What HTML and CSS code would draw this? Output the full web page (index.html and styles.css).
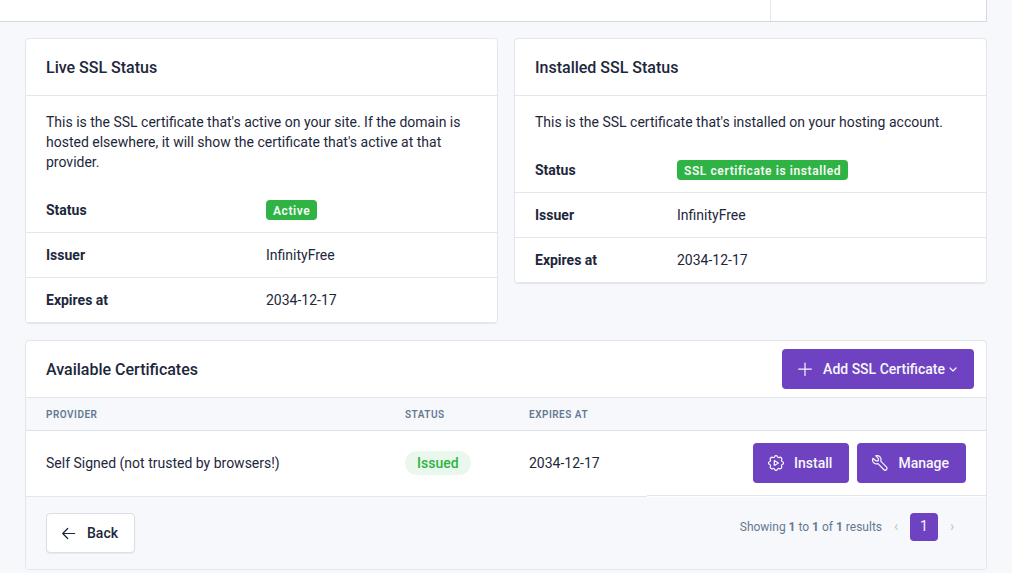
FILE: index.html
```html
<!DOCTYPE html>
<html lang="en">
<head>
<meta charset="utf-8">
<title>SSL Certificates</title>
<link rel="stylesheet" href="styles.css">
</head>
<body>
<div class="frame-strip"><div class="frame-main"></div><div class="frame-side"></div></div>
<main class="page">
  <div class="row">
    <section class="card">
      <div class="card-header"><h3>Live SSL Status</h3></div>
      <p class="card-body">This is the SSL certificate that's active on your site. If the domain is hosted elsewhere, it will show the certificate that's active at that provider.</p>
      <table class="details details-live">
        <tr><th scope="row">Status</th><td><span class="badge">Active</span></td></tr>
        <tr><th scope="row">Issuer</th><td>InfinityFree</td></tr>
        <tr><th scope="row">Expires at</th><td>2034-12-17</td></tr>
      </table>
    </section>
    <section class="card">
      <div class="card-header"><h3>Installed SSL Status</h3></div>
      <p class="card-body">This is the SSL certificate that's installed on your hosting account.</p>
      <table class="details details-installed">
        <tr><th scope="row">Status</th><td><span class="badge">SSL certificate is installed</span></td></tr>
        <tr><th scope="row">Issuer</th><td>InfinityFree</td></tr>
        <tr><th scope="row">Expires at</th><td>2034-12-17</td></tr>
      </table>
    </section>
  </div>
  <section class="card">
    <div class="card-header card-header-actions">
      <h3>Available Certificates</h3>
      <button type="button" class="btn btn-primary">
        <svg class="icon" viewBox="0 0 16 16"><path d="M8 2v12.500M1.700 8.200h12.600"/></svg>
        <span>Add SSL Certificate</span>
        <svg class="caret" viewBox="0 0 8 8"><path d="M1 3l3 3 3-3"/></svg>
      </button>
    </div>
    <table class="certs">
      <thead><tr><th class="col-provider">Provider</th><th class="col-status">Status</th><th class="col-expires">Expires at</th><th></th></tr></thead>
      <tbody><tr>
        <td>Self Signed (not trusted by browsers!)</td>
        <td><span class="status">Issued</span></td>
        <td>2034-12-17</td>
        <td class="actions">
          <button type="button" class="btn btn-primary">
            <svg class="icon" viewBox="0 0 16 16"><path d="M6.500 1.700C7 .2 9 .2 9.500 1.700C9.800 2.500 10.600 2.700 11.300 2.400C12.700 1.700 14.300 3.300 13.600 4.700C13.300 5.400 13.500 6.200 14.300 6.500C15.800 7 15.800 9 14.300 9.500C13.500 9.800 13.300 10.600 13.600 11.300C14.300 12.700 12.700 14.300 11.300 13.600C10.600 13.300 9.800 13.500 9.500 14.300C9 15.800 7 15.800 6.500 14.300C6.200 13.500 5.400 13.300 4.700 13.600C3.300 14.300 1.700 12.700 2.400 11.300C2.700 10.600 2.500 9.800 1.700 9.500C.2 9 .2 7 1.700 6.500C2.500 6.200 2.700 5.400 2.400 4.700C1.700 3.300 3.300 1.700 4.700 2.400C5.400 2.700 6.200 2.500 6.500 1.700z"/><path d="M6.300 5.600v4.800L10.500 8z"/></svg>
            <span>Install</span>
          </button>
          <button type="button" class="btn btn-primary">
            <svg class="icon" viewBox="0 0 16 16"><path d="M3.800.8l2.500 2.500v2.500H3.800L1 3.300C.3 5 .6 6.800 1.800 7.900c1.200 1.100 2.700 1.300 4.200.7l5.700 5.900c.8.8 2 .9 2.800.1s.7-2-.1-2.800L8.700 6.100c.6-1.500.4-3-.7-4.200C6.900.7 5.500.2 3.800.8z"/></svg>
            <span>Manage</span>
          </button>
        </td>
      </tr></tbody>
    </table>
    <div class="card-footer">
      <a href="#" class="btn btn-back">
        <svg class="icon" viewBox="0 0 16 16"><path d="M13.700 8.500H1.700M6.700 3.500l-5 5 5 5"/></svg>
        <span>Back</span>
      </a>
      <nav class="pager" aria-label="Pagination">
        <span class="summary">Showing <b>1</b> to <b>1</b> of <b>1</b> results</span>
        <span class="page-link off">‹</span>
        <a href="#" class="page-link current">1</a>
        <span class="page-link off">›</span>
      </nav>
    </div>
  </section>
</main>
</body>
</html>
```
FILE: styles.css
```css
* { box-sizing: border-box; }
body {
  margin: 0;
  background: #f6f8fc;
  color: #1d273b;
  font: 14px/20px Roboto, "Liberation Sans", sans-serif;
}
.frame-strip {
  display: flex;
  height: 22px;
  margin-right: 25px;
  background: #fff;
  border: solid #d5d9df;
  border-width: 0 1px 1px 0;
}
.frame-main { flex: 1; }
.frame-side { width: 216px; border-left: 1px solid #e3e6ea; }
.page { padding: 16px 25px 0; }
.row {
  display: grid;
  grid-template-columns: 1fr 1fr;
  align-items: start;
  gap: 16px;
  margin-bottom: 16px;
}
.card {
  background: #fff;
  border: 1px solid #e3e6ed;
  border-radius: 4px;
  overflow: hidden;
}
.card-header { padding: 17px 20px 15px; border-bottom: 1px solid #e3e6ea; }
.card-header-actions {
  display: flex;
  align-items: center;
  justify-content: space-between;
  padding: 8px 12px 8px 20px;
}
h3 { margin: 0; font-size: 16px; line-height: 24px; font-weight: 500; }
.card-header-actions h3 { line-height: 26px; padding-top: 2px; }
.card-body { margin: 0; padding: 16px 20px; }
table { width: 100%; border-collapse: separate; border-spacing: 0; }
th { text-align: left; }
.details th, .details td {
  height: 45px;
  padding: 12px 8px;
  border-bottom: 1px solid #e3e6ea;
}
.details th:first-child, .certs th:first-child, .certs td:first-child { padding-left: 20px; }
.details-live th { width: 232px; }
.details-installed th { width: 154px; }
.badge {
  display: block;
  width: fit-content;
  padding: 5px 7px 3px;
  border-radius: 4px;
  background: #2fb344;
  color: #f6fbf7;
  font-size: 12px;
  line-height: 12px;
  font-weight: 600;
  letter-spacing: 0.05em;
}
.certs { table-layout: fixed; }
.certs th {
  padding: 9px 8px 7px;
  background: #f6f8fc;
  border-bottom: 1px solid #dce1e8;
  color: #667891;
  font-size: 10px;
  line-height: 16px;
  font-weight: 600;
  letter-spacing: 0.05em;
  text-transform: uppercase;
}
.col-provider { width: 371px; }
.col-status { width: 124px; }
.col-expires { width: 126px; }
.certs tbody tr { height: 66px; }
.certs td { padding: 11px 8px 13px; border-bottom: 1px solid #e3e6ea; }
.certs .actions {
  display: flex;
  justify-content: flex-end;
  gap: 8px;
  padding: 12px 20px 12px 8px;
}
.status {
  display: inline-block;
  padding: 2px 12px;
  border-radius: 12px;
  background: #eaf7ec;
  color: #2fb344;
  font-weight: 500;
}
.btn {
  display: inline-flex;
  align-items: center;
  height: 40px;
  padding: 0 16px 0 14px;
  border: 1px solid transparent;
  border-radius: 4px;
  font: 500 14px/20px Roboto, "Liberation Sans", sans-serif;
  text-decoration: none;
}
.btn-primary { background: #6f42c1; color: #f6f8fb; }
.btn-back {
  background: #fff;
  border-color: #dadfe6;
  color: #1d273b;
  box-shadow: 0 1px 1px #e9ecf1;
}
svg { fill: none; stroke: currentColor; stroke-width: 1.2; stroke-linecap: round; stroke-linejoin: round; }
.icon { width: 16px; height: 16px; margin-right: 10px; }
.caret { width: 8px; height: 8px; margin-left: 4px; }
.card-footer {
  display: flex;
  justify-content: space-between;
  align-items: flex-start;
  padding: 16px 20px;
  background: #f6f8fc;
}
.pager { display: flex; align-items: center; color: #667891; }
.summary { font-size: 12px; }
.page-link {
  min-width: 28px;
  padding: 3px 4px 5px;
  border-radius: 4px;
  text-align: center;
  text-decoration: none;
}
.current { background: #6f42c1; color: #f6f8fb; }
.off { color: #bdc4cf; }
```
